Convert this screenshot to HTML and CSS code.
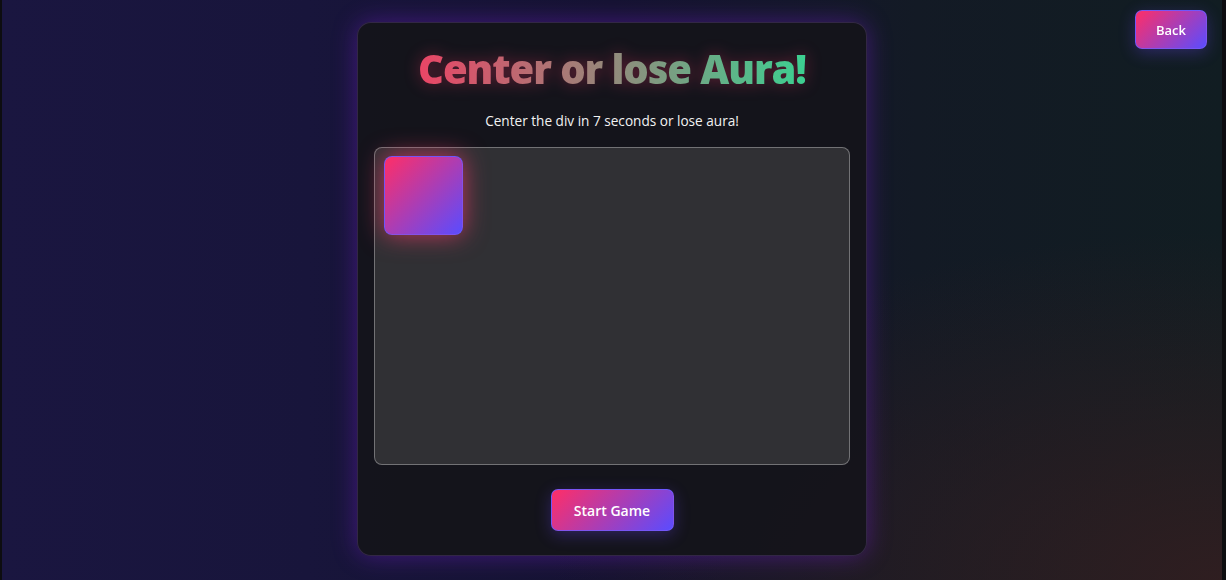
FILE: index.html
```html
<!DOCTYPE html>
<html lang="en">
<head>
<meta charset="UTF-8">
<title>Center or lose Aura!</title>
<link rel="stylesheet" href="styles.css">
</head>
<body>
  <button class="back-btn">Back</button>
  <main class="page">
    <section class="card">
      <h1 class="title">Center or lose Aura!</h1>
      <p class="subtitle">Center the div in 7 seconds or lose aura!</p>
      <div class="arena">
        <div class="box"></div>
      </div>
      <button class="start-btn">Start Game</button>
    </section>
  </main>
</body>
</html>
```

FILE: styles.css
```css
* { box-sizing: border-box; }

html {
  background: #0d0d10;
  height: 100%;
}

body {
  margin: 0 4px 0 2px;
  min-height: 100vh;
  font-family: "Open Sans", "Noto Sans", sans-serif;
  color: #fff;
  background:
    radial-gradient(ellipse 55% 60% at 100% 100%, rgba(52, 30, 32, 0.85), rgba(52, 30, 32, 0) 100%),
    linear-gradient(90deg, #1a1640 0%, #18153b 25%, #151331 50%, #131a25 75%, #111d22 100%);
}

.page {
  display: flex;
  justify-content: center;
  padding-top: 22px;
}

.card {
  width: 510px;
  height: 534px;
  padding: 24px 16px 24px;
  border: 1px solid rgba(160, 110, 220, 0.22);
  border-radius: 14px;
  background: rgba(21, 21, 27, 0.97);
  box-shadow: 0 0 24px rgba(120, 30, 210, 0.45);
  display: flex;
  flex-direction: column;
  align-items: center;
}

.title {
  margin: 0 0 4px;
  font-size: 40px;
  line-height: 44px;
  font-weight: 800;
  letter-spacing: -1.1px;
  background: linear-gradient(90deg, #ea4566 0%, #3ccf91 100%);
  -webkit-background-clip: text;
  background-clip: text;
  -webkit-text-fill-color: transparent;
  color: transparent;
  filter: drop-shadow(0 0 8px rgba(255, 51, 102, 0.35));
}

.subtitle {
  margin: 16px 0 16px;
  font-size: 13.6px;
  line-height: 20px;
  color: #f2f2f2;
}

.arena {
  align-self: stretch;
  height: 318px;
  background: #303034;
  border: 1px solid rgba(255, 255, 255, 0.32);
  border-radius: 8px;
  padding: 8px 9px;
}

.box {
  width: 79px;
  height: 79px;
  border-radius: 8px;
  background: linear-gradient(135deg, #ff2e67 0%, #5a4cff 100%);
  border: 1px solid rgba(110, 90, 255, 0.8);
  box-shadow: 0 0 24px rgba(255, 60, 110, 0.7);
}

.start-btn,
.back-btn {
  font-family: "Open Sans", "Noto Sans", sans-serif;
  font-weight: 600;
  color: #fff;
  border-radius: 7px;
  border: 1px solid rgba(110, 90, 255, 0.85);
  background: linear-gradient(135deg, #ff2e67 0%, #5a4cff 100%);
  box-shadow: 0 4px 16px rgba(110, 70, 255, 0.3);
  cursor: pointer;
}

.start-btn {
  margin-top: 24px;
  width: 123px;
  height: 42px;
  font-size: 14px;
}

.back-btn {
  position: fixed;
  top: 10px;
  right: 19px;
  width: 72px;
  height: 39px;
  font-size: 13px;
}
```
